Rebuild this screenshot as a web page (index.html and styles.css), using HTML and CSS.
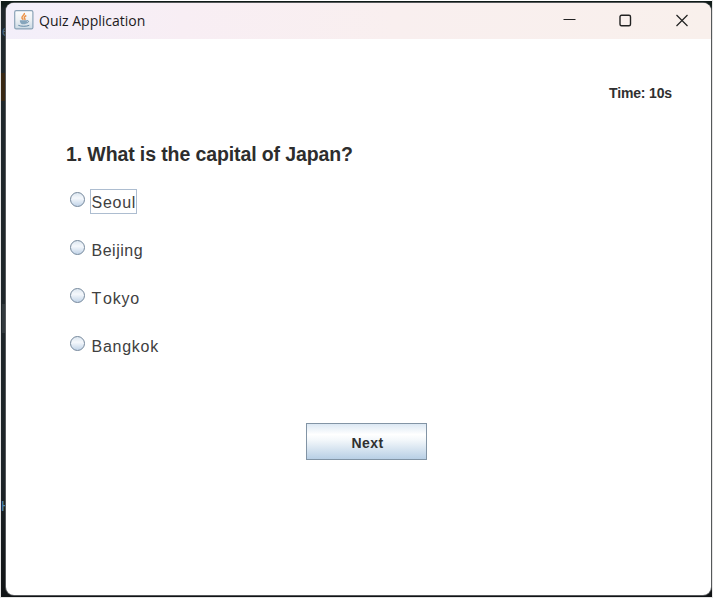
FILE: index.html
```html
<!DOCTYPE html>
<html lang="en">
<head>
<meta charset="utf-8">
<title>Quiz Application</title>
<link rel="stylesheet" href="styles.css">
</head>
<body>
<div class="desktop">
  <span class="backdrop-letter backdrop-top">e</span>
  <span class="backdrop-band"></span>
  <span class="backdrop-tint"></span>
  <span class="backdrop-letter backdrop-bottom">H</span>
  <main class="window">
    <header class="titlebar">
      <svg class="app-icon" width="20" height="20" viewBox="0 0 20 20">
        <defs><linearGradient id="tile" x1="0" y1="0" x2="0" y2="1"><stop offset="0" stop-color="#fbfcfd"/><stop offset=".5" stop-color="#edf1f4"/><stop offset="1" stop-color="#cbd9e4"/></linearGradient></defs>
        <rect x=".7" y=".7" width="18.2" height="18.2" rx="1.5" fill="url(#tile)" stroke="#8ba3b7" stroke-width="1.2"/>
        <path d="M10.300 3c1 2-3 3-2.300 5 .2.800 1 1.100 1.400 1.700M12.300 5.500c-2 1-2.600 2-1.500 3.200.4.500.2 1-.3 1.400" fill="none" stroke="#ec9448" stroke-width="1.500"/>
        <path d="M5.800 10.300h7.200c0 2-.7 3.400-2 4H8c-1.300-.6-2.200-2-2.200-4z" fill="#86a5bc"/>
        <path d="M12.900 10.800c2.500-.6 2.200 2-.8 2.200M4.300 15.300c2.600 1.300 8.400 1.300 11 0" fill="none" stroke="#668ba7" stroke-width="1"/>
      </svg>
      <h1 class="title">Quiz Application</h1>
      <svg class="controls" width="126" height="14" viewBox="0 0 126 14" fill="none" stroke="#222" stroke-width="1.200">
        <path d="M-.5 5.500h12"/>
        <rect x="56" y="1.200" width="10.500" height="10.500" rx="1.500" stroke-width="1.400"/>
        <path d="M112.500 1l11 11M123.500 1l-11 11"/>
      </svg>
    </header>
    <section class="content">
      <p class="timer">Time: 10s</p>
      <h2 class="question">1. What is the capital of Japan?</h2>
      <div class="options">
        <div class="option focused"><i class="radio"></i><span class="label">Seoul</span></div>
        <div class="option"><i class="radio"></i><span class="label beijing">Beijing</span></div>
        <div class="option"><i class="radio"></i><span class="label"><span class="wide-cap">T</span>okyo</span></div>
        <div class="option"><i class="radio"></i><span class="label">Bangkok</span></div>
      </div>
      <button class="next">Next</button>
    </section>
  </main>
</div>
</body>
</html>
```
FILE: styles.css
```css
* { box-sizing: border-box; }
body { margin: 0; background: #e4e4e4; }
.desktop {
  position: relative;
  width: 712px;
  height: 598px;
  padding: 2px 1px 2px 5px;
  border: 1px solid #e4e4e4;
  border-top-color: #fff;
  border-right: 0;
  background: linear-gradient(#101b18 0 3px, #20282c 8px, #1d2428 80%, #101315);
  overflow: hidden;
}
.window {
  width: 705px;
  height: 592px;
  position: relative;
  border-radius: 8px;
  background: #fff;
  box-shadow: 0 0 0 1px #55585a;
  overflow: hidden;
}
.backdrop-letter { position: absolute; font: 14px "Liberation Sans", sans-serif; }
.backdrop-top { left: 1px; top: 22px; color: #496478; }
.backdrop-bottom { left: 0; top: 497px; color: #5487ad; }
.backdrop-band { position: absolute; left: 1px; top: 303px; width: 5px; height: 29px; background: #32393d; }
.backdrop-tint { position: absolute; left: 0; top: 72px; width: 5px; height: 28px; background: #382814; }
.titlebar {
  display: flex;
  align-items: center;
  height: 36px;
  padding: 0 21px 0 8px;
  background: linear-gradient(90deg, #f3effa, #f8eef4 25%, #f9efef 55%, #f9f0ec);
}
.app-icon { flex: none; margin-top: -2px; }
.title {
  margin: -1px 0 0 5px;
  color: #1c1a1c;
  font: 14px "Open Sans", sans-serif;
}
.controls { margin-left: auto; margin-top: -1px; overflow: visible; }
.content { display: flex; flex-direction: column; font-family: "Liberation Sans", sans-serif; }
.timer {
  margin: 45px 39px 0 0;
  text-align: right;
  color: #303030;
  font-size: 14px;
  font-weight: bold;
  line-height: 18px;
  letter-spacing: -.15px;
}
.question {
  margin: 40px 0 0 60px;
  font-size: 19.500px;
  line-height: 24px;
  letter-spacing: -.11px;
  color: #2d2d2d;
}
.options { display: flex; flex-direction: column; margin: 23px 0 0 64px; }
.option { display: flex; align-items: flex-start; height: 48px; }
.radio {
  width: 15px;
  height: 15px;
  margin-top: 3px;
  border: 1.500px solid #74879b;
  border-radius: 50%;
  background: linear-gradient(#dce6f0, #f5f8fc 40%, #c2d4e8);
}
.label {
  height: 25px;
  margin-left: 5px;
  padding-left: .5px;
  border: 1px solid transparent;
  color: #404040;
  font-size: 16px;
  line-height: 26px;
  letter-spacing: .75px;
}
.beijing { letter-spacing: .5px; }
.wide-cap { letter-spacing: 1.700px; }
.focused .label { border-color: #adbdd0; }
.next {
  width: 121px;
  height: 37px;
  margin: 42px 0 0 300px;
  padding: 2px 0 0 2px;
  border: 1px solid #8294a5;
  background: linear-gradient(#dce8f3, #fff 30%, #f4f8fb 45%, #b8cfe5);
  color: #303030;
  font: bold 14px "Liberation Sans", sans-serif;
  letter-spacing: .45px;
}
```
